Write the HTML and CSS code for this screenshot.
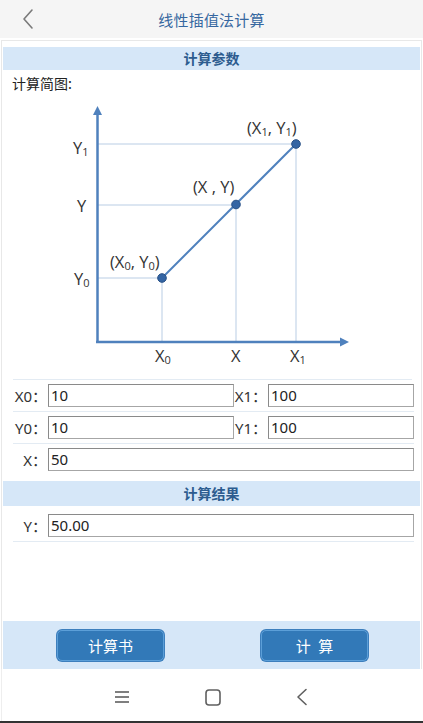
FILE: index.html
```html
<!DOCTYPE html>
<html lang="zh-CN">
<head>
<meta charset="utf-8">
<title>线性插值法计算</title>
<link rel="stylesheet" href="styles.css">
</head>
<body>
<div class="app">
  <header class="topbar">
    <svg class="back" width="14" height="22" viewBox="0 0 14 22"><path d="M11 2 L3 11 L11 20" fill="none" stroke="#7a7a7a" stroke-width="1.6" stroke-linecap="round" stroke-linejoin="round"/></svg>
    <div class="title">线性插值法计算</div>
  </header>
  <main class="main">
    <div class="band">计算参数</div>
    <div class="caption">计算简图:</div>
    <svg class="diagram" width="417" height="280" viewBox="3 96 417 280">
      <g stroke="#b9cde4" stroke-width="1" fill="none">
        <line x1="98" y1="144" x2="296" y2="144"/>
        <line x1="98" y1="205" x2="236" y2="205"/>
        <line x1="98" y1="278" x2="162" y2="278"/>
        <line x1="162" y1="278" x2="162" y2="342"/>
        <line x1="236" y1="205" x2="236" y2="342"/>
        <line x1="296" y1="144" x2="296" y2="342"/>
      </g>
      <g stroke="#4f81bd" stroke-width="2.5" fill="none">
        <line x1="97.5" y1="112" x2="97.5" y2="342"/>
        <line x1="96" y1="342" x2="342" y2="342"/>
      </g>
      <path d="M97.5 106 L93 115 L102 115 Z" fill="#4f81bd"/>
      <path d="M349 342 L340 337.5 L340 346.5 Z" fill="#4f81bd"/>
      <line x1="162" y1="278" x2="296" y2="144" stroke="#4f81bd" stroke-width="2"/>
      <g fill="#3465a4" stroke="#264f85" stroke-width="1">
        <circle cx="162" cy="278" r="4.3"/>
        <circle cx="236" cy="204.5" r="4.3"/>
        <circle cx="296" cy="144" r="4.3"/>
      </g>
      <g class="lbl" font-size="16.5" fill="#333">
        <text x="73" y="154">Y<tspan font-size="11" dy="2">1</tspan></text>
        <text x="77" y="212">Y</text>
        <text x="74" y="285">Y<tspan font-size="11" dy="2">0</tspan></text>
        <text x="155" y="362">X<tspan font-size="11" dy="2">0</tspan></text>
        <text x="231" y="362">X</text>
        <text x="290" y="362">X<tspan font-size="11" dy="2">1</tspan></text>
        <text x="247" y="134">(X<tspan font-size="11" dy="2">1</tspan><tspan dy="-2">, Y</tspan><tspan font-size="11" dy="2">1</tspan><tspan dy="-2">)</tspan></text>
        <text x="193" y="193">(X , Y)</text>
        <text x="110" y="268">(X<tspan font-size="11" dy="2">0</tspan><tspan dy="-2">, Y</tspan><tspan font-size="11" dy="2">0</tspan><tspan dy="-2">)</tspan></text>
      </g>
    </svg>
    <div class="form">
      <div class="row two">
        <label class="lab">X0：</label><div class="inp">10</div>
        <label class="lab">X1：</label><div class="inp">100</div>
      </div>
      <div class="row two">
        <label class="lab">Y0：</label><div class="inp">10</div>
        <label class="lab">Y1：</label><div class="inp">100</div>
      </div>
      <div class="row one last">
        <label class="lab">X：</label><div class="inp">50</div>
      </div>
    </div>
    <div class="band tall">计算结果</div>
    <div class="form result">
      <div class="row one">
        <label class="lab">Y：</label><div class="inp">50.00</div>
      </div>
    </div>
    <div class="spacer"></div>
    <div class="footer">
      <button class="btn">计算书</button>
      <button class="btn">计&ensp;算</button>
    </div>
  </main>
  <nav class="navbar">
    <svg width="16" height="14" viewBox="0 0 16 14"><g stroke="#606060" stroke-width="1.6"><line x1="1" y1="2" x2="15" y2="2"/><line x1="1" y1="7" x2="15" y2="7"/><line x1="1" y1="12" x2="15" y2="12"/></g></svg>
    <svg width="16" height="17" viewBox="0 0 16 17"><rect x="1" y="1" width="14" height="15" rx="3" fill="none" stroke="#606060" stroke-width="1.6"/></svg>
    <svg width="12" height="18" viewBox="0 0 12 18"><path d="M10 1.5 L2 9 L10 16.5" fill="none" stroke="#606060" stroke-width="1.6" stroke-linecap="round" stroke-linejoin="round"/></svg>
  </nav>
  <div class="bottomline"></div>
</div>
</body>
</html>
```
FILE: styles.css
```css
* { box-sizing: border-box; }
html, body { margin: 0; padding: 0; background: #fff; }
body {
  font-family: "Noto Sans CJK SC", "Noto Sans", sans-serif;
  color: #222;
}
.app {
  width: 423px;
  height: 723px;
  display: flex;
  flex-direction: column;
  overflow: hidden;
}
.topbar {
  height: 38px;
  flex: none;
  background: #f5f5f5;
  display: flex;
  align-items: center;
  justify-content: center;
  position: relative;
  margin-bottom: 2px;
}
.back {
  position: absolute;
  left: 21px;
  top: 8px;
}
.title {
  font-size: 15px;
  color: #3567a0;
  letter-spacing: 0.2px;
}
.main {
  flex: 1;
  display: flex;
  flex-direction: column;
  margin: 0 1px;
  border: 1px solid #e8e8e8;
  border-bottom: none;
  padding: 6px 1px 0;
}
.band {
  height: 23px;
  background: #d6e7f8;
  color: #2d5c8f;
  font-weight: bold;
  font-size: 14px;
  line-height: 23px;
  text-align: center;
}
.band.tall { height: 25px; line-height: 25px; }
.caption {
  height: 26px;
  line-height: 26px;
  font-size: 14px;
  padding-left: 9px;
  color: #222;
}
.diagram { display: block; }
.lbl { font-family: "Open Sans", "Noto Sans", sans-serif; }
.form {
  margin: 3px 8px 6px 10px;
  border-top: 1px solid #e3ebf3;
}
.form.result { border-top: none; margin-top: 4px; }
.row {
  display: grid;
  align-items: center;
  padding: 4px 0;
  border-bottom: 1px solid #e3ebf3;
  margin-right: -2px;
}
.row.last { border-bottom: none; }
.row.two { grid-template-columns: 35px 186px 34px 1fr; }
.row.one { grid-template-columns: 35px 1fr; }
.lab {
  font-family: "Noto Sans", "Noto Sans CJK SC", sans-serif;
  font-size: 15px;
  color: #333;
  text-align: right;
  padding-right: 1px;
  white-space: nowrap;
}
.inp {
  height: 23px;
  border: 1px solid #a6a6a6;
  border-top-color: #8a8a8a;
  border-left-color: #8a8a8a;
  font-family: "Noto Sans", sans-serif;
  font-size: 15px;
  line-height: 21px;
  padding-left: 2px;
  color: #222;
  background: #fff;
}
.spacer { flex: 1; }
.footer {
  height: 48px;
  flex: none;
  background: #d6e7f8;
  display: flex;
  align-items: center;
  padding-left: 54px;
  gap: 97px;
}
.btn {
  width: 107px;
  height: 31px;
  background: #3279b8;
  border: 1.5px solid #5c9fd8;
  border-radius: 5px;
  color: #fff;
  font-family: "Noto Sans CJK SC", sans-serif;
  font-size: 15px;
  padding: 0;
  box-shadow: 0 0 0 1px #3d7fbd;
}
.navbar {
  height: 52px;
  flex: none;
  display: flex;
  align-items: center;
  padding-left: 112px;
  padding-top: 4px;
  gap: 75px;
  margin-left: 1px;
  border-left: 1px solid #eee;
}
.bottomline {
  height: 2px;
  background: #333;
  flex: none;
}
```
